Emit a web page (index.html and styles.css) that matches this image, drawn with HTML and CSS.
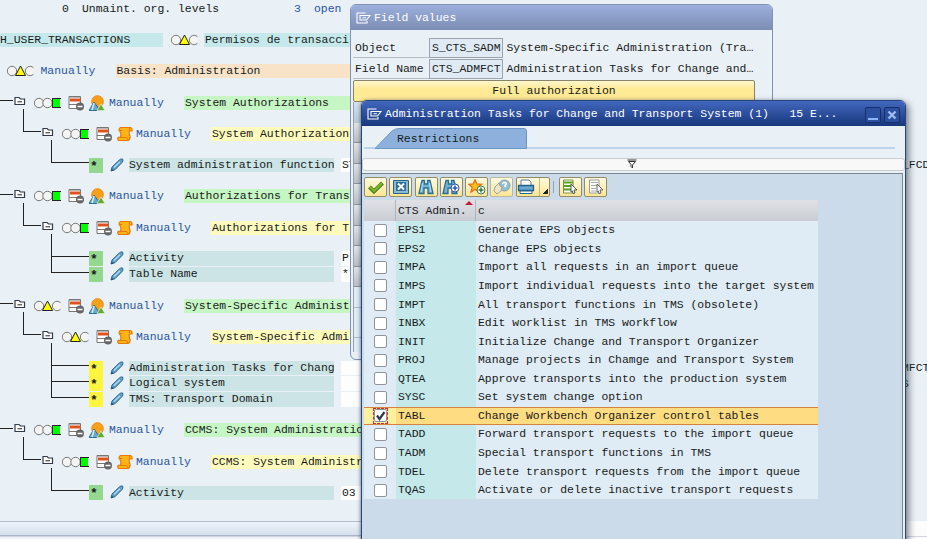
FILE: index.html
```
<!DOCTYPE html>
<html lang="en">
<head>
<meta charset="UTF-8" />
<title>Authorizations</title>
<link rel="stylesheet" href="styles.css">
</head>
<body>

<svg class="sprite">
  <symbol id="folder" viewBox="0 0 12 10"><path d="M1 8.5V1.5H5L6.5 3H10.5V8.5Z" fill="#fff" stroke="#333a48" stroke-width="1.2"/><path d="M3.5 5.8H8" stroke="#222"/></symbol>
  <symbol id="green" viewBox="0 0 27 12"><circle cx="5" cy="6" r="4.7" fill="#f4f4f4" stroke="#777"/><circle cx="13.5" cy="6" r="4.7" fill="#f4f4f4" stroke="#777"/><path d="M18 1.5H27M18 10.5H27M18.5 1V11" stroke="#222" fill="none"/><path d="M19 2H26V10H19Z" fill="#0f0"/></symbol>
  <symbol id="yellow" viewBox="0 0 27 12"><circle cx="5" cy="6" r="4.7" fill="#f4f4f4" stroke="#777"/><path d="M26.5 2.8A4.7 4.7 0 1 0 26.5 9.2" fill="#f4f4f4" stroke="#777"/><path d="M13.5 1L18.5 10.5H8.5Z" fill="#ff0" stroke="#222"/></symbol>
  <symbol id="list" viewBox="0 0 16 16"><path d="M1 1.5H12.5V13.5H1Z" fill="#fff" stroke="#777"/><path d="M1.5 2H12M1 9.5H9M1 13.5H8" stroke="#777"/><path d="M2 5H12" stroke="#e2511b" stroke-width="3"/><circle cx="12" cy="11.5" r="4" fill="#666"/><path d="M9.5 11.5H14.5" stroke="#fff" stroke-width="1.5"/></symbol>
  <symbol id="hill" viewBox="0 0 16 16"><circle cx="8.5" cy="6.5" r="5.8" fill="#f9a01b" stroke="#ed8b12"/><path d="M0 15.5L5 7L11 15.5Z" fill="#6aa9cb" stroke="#286f9c"/><path d="M5 8L3 15" stroke="#d8edf5" stroke-width="1.5"/><path d="M8 15.5L12 9L16 15.5Z" fill="#62ab32" stroke="#e9f2df" stroke-width=".7"/></symbol>
  <symbol id="scroll" viewBox="0 0 16 16"><path d="M3.500 1.500H13.500Q15.500 2.200 15 5H12.500Q11.500 6.500 13 10.500Q13.500 13.500 11 14.500H1.500Q0 12.500 1.500 11.300H3.500Q4.500 8 3 5.500Q.8 3.500 3.500 1.500Z" fill="#fdb515" stroke="#e8780d" stroke-width="1.200"/><path d="M3 4.500H5M12.500 2V4.500M3.500 11.500H9.500L11 14" stroke="#e8780d" fill="none"/></symbol>
  <symbol id="pen" viewBox="0 0 14 14"><path d="M1 13L2 9L9.5 1.8Q10.5 .6 12.7 1Q13.4 3 12.3 4.3L5 11.7Z" fill="#5ba1ca" stroke="#316b91"/><path d="M4 9.5L10 3.7" stroke="#b4d9eb" stroke-width="1.3"/><path d="M1 13L1.8 10.5L3.7 12.2Z" fill="#254f6c"/></symbol>
  <symbol id="exit" viewBox="0 0 15 12"><path d="M9.500 1H1V11H11V9M4 3.500H14L10.500 8H4Z M6.500 5.700H10" fill="none" stroke="#fff" stroke-width="1.100"/></symbol>
</svg>

<div class="tree">
  <div class="row"><span class="count">0</span><span class="unmaint">Unmaint. org. levels</span><span class="blue open-count">3</span><span class="blue">open</span></div>
  <div class="row gap"><span class="role">H_USER_TRANSACTIONS</span><svg class="lights"><use href="#yellow"/></svg><span class="label cyan">Permisos de transacci</span></div>
  <div class="row gap top"><svg class="lights"><use href="#yellow"/></svg><span class="blue status">Manually</span><span class="label orange">Basis: Administration</span></div>

  <div class="row gap l1"><svg class="folder"><use href="#folder"/></svg><svg class="lights"><use href="#green"/></svg><svg class="ico"><use href="#list"/></svg><svg class="ico"><use href="#hill"/></svg><span class="blue status">Manually</span><span class="label green">System Authorizations</span></div>
  <div class="row gap l2"><svg class="folder"><use href="#folder"/></svg><svg class="lights"><use href="#green"/></svg><svg class="ico"><use href="#list"/></svg><svg class="ico"><use href="#scroll"/></svg><span class="blue status">Manually</span><span class="label yellow">System Authorization</span></div>
  <div class="row gap leaf first"><span class="star">*</span><svg class="pen"><use href="#pen"/></svg><span class="field">System administration function</span><span class="value">ST</span><span class="tail">_FCD</span></div>

  <div class="row gap l1"><svg class="folder"><use href="#folder"/></svg><svg class="lights"><use href="#green"/></svg><svg class="ico"><use href="#list"/></svg><svg class="ico"><use href="#hill"/></svg><span class="blue status">Manually</span><span class="label green">Authorizations for Trans</span></div>
  <div class="row gap l2"><svg class="folder"><use href="#folder"/></svg><svg class="lights"><use href="#green"/></svg><svg class="ico"><use href="#list"/></svg><svg class="ico"><use href="#scroll"/></svg><span class="blue status">Manually</span><span class="label yellow">Authorizations for T</span></div>
  <div class="row gap leaf first"><span class="star">*</span><svg class="pen"><use href="#pen"/></svg><span class="field">Activity</span><span class="value">P</span></div>
  <div class="row leaf"><span class="star">*</span><svg class="pen"><use href="#pen"/></svg><span class="field">Table Name</span><span class="value">*</span></div>

  <div class="row gap l1"><svg class="folder"><use href="#folder"/></svg><svg class="lights"><use href="#yellow"/></svg><svg class="ico"><use href="#list"/></svg><svg class="ico"><use href="#hill"/></svg><span class="blue status">Manually</span><span class="label green">System-Specific Administ</span></div>
  <div class="row gap l2"><svg class="folder"><use href="#folder"/></svg><svg class="lights"><use href="#yellow"/></svg><svg class="ico"><use href="#list"/></svg><svg class="ico"><use href="#scroll"/></svg><span class="blue status">Manually</span><span class="label yellow">System-Specific Admi</span></div>
  <div class="row gap leaf first open"><span class="star">*</span><svg class="pen"><use href="#pen"/></svg><span class="field">Administration Tasks for Chang</span><span class="value"></span><span class="tail">MFCT</span></div>
  <div class="row leaf open"><span class="star">*</span><svg class="pen"><use href="#pen"/></svg><span class="field">Logical system</span><span class="value"></span><span class="tail">S</span></div>
  <div class="row leaf open"><span class="star">*</span><svg class="pen"><use href="#pen"/></svg><span class="field">TMS: Transport Domain</span><span class="value"></span></div>

  <div class="row gap l1"><svg class="folder"><use href="#folder"/></svg><svg class="lights"><use href="#green"/></svg><svg class="ico"><use href="#list"/></svg><svg class="ico"><use href="#hill"/></svg><span class="blue status">Manually</span><span class="label green">CCMS: System Administratio</span></div>
  <div class="row gap l2"><svg class="folder"><use href="#folder"/></svg><svg class="lights"><use href="#green"/></svg><svg class="ico"><use href="#list"/></svg><svg class="ico"><use href="#scroll"/></svg><span class="blue status">Manually</span><span class="label yellow">CCMS: System Administr</span></div>
  <div class="row gap leaf first"><span class="star">*</span><svg class="pen"><use href="#pen"/></svg><span class="field">Activity</span><span class="value">03</span></div>
</div>
<footer class="statusbar"><span></span></footer>

<section class="window field-values">
  <header><svg class="exit"><use href="#exit"/></svg><span>Field values</span></header>
  <div class="form">
    <div class="form-row"><label>Object</label><span class="input">S_CTS_SADM</span><span>System-Specific Administration (Tra…</span></div>
    <div class="form-row"><label>Field Name</label><span class="input">CTS_ADMFCT</span><span>Administration Tasks for Change and…</span></div>
    <button>Full authorization</button>
    <div class="side"></div>
  </div>
</section>

<section class="window tasks">
  <header><svg class="exit"><use href="#exit"/></svg><span>Administration Tasks for Change and Transport System (1)&nbsp;&nbsp; 15 E...</span>
    <div class="controls">
      <i><svg viewBox="0 0 14 14"><path d="M2 11H12" stroke="#8fb6fb" stroke-width="2"/></svg></i>
      <i><svg viewBox="0 0 14 14"><path d="M3.500 3.500L10.500 10.500M10.500 3.500L3.500 10.500" stroke="#a0bdf2" stroke-width="2.300"/></svg></i>
    </div>
  </header>
  <div class="tabs">
    <svg class="tab-shape" viewBox="0 0 152 21"><path d="M0 20.500L17 3Q20 .5 24 .5H149Q151.500 .5 151.500 3V20.500Z" fill="#8db1dc" stroke="#6b97c6"/></svg>
    <span>Restrictions</span>
  </div>
  <div class="filter"><svg viewBox="0 0 10 10"><path d="M.5 1H9.500M1.500 2.500H8.500L5.500 6V9L4 7.500V5.500Z" fill="#fff" stroke="#333"/></svg></div>
  <div class="panel">
    <div class="toolbar">
      <b><svg viewBox="0 0 18 16"><path d="M2.500 8L7 12.500L15.500 4" fill="none" stroke="#4f7d20" stroke-width="4"/><path d="M3 8L7 12L15 4.200" fill="none" stroke="#7cb82f" stroke-width="2.200"/></svg></b>
      <b><svg viewBox="0 0 18 16"><path d="M1.500 1.500H16.500V14.500H1.500Z" fill="#8dbad6" stroke="#286486"/><path d="M4 3H14V12H4Z" fill="#2e7299"/><path d="M6 4.500L12 10.500M12 4.500L6 10.500" stroke="#fff" stroke-width="2"/></svg></b>
      <b><svg viewBox="0 0 18 16"><path d="M5 1.500H7.500V5H10.500V1.500H13L16 14.500H11V9H7V14.500H2Z" fill="#75b1d3" stroke="#266d98" stroke-width="1.300"/><path d="M5.500 4L4 13M12.500 4L14 13" stroke="#bce0ef"/></svg></b>
      <b><svg viewBox="0 0 18 16"><path d="M4 1.500H6.500V5H9.500V1.500H12L15 14.500H10V9H6V14.500H1Z" fill="#75b1d3" stroke="#266d98" stroke-width="1.300"/><circle cx="13" cy="9" r="4" fill="#fff" stroke="#31559b"/><path d="M10.500 9H15.500M13 6.500V11.500" stroke="#2660b5" stroke-width="1.600"/></svg></b>
      <b><svg viewBox="0 0 18 16"><path d="M7 .8L8.800 5L13.500 5.300L10 8.300L11 13L7 10.400L3 13L4.200 8.300L.8 5.300L5.200 5Z" fill="#ffc21d" stroke="#e6711b" stroke-width="1.300"/><circle cx="13" cy="11" r="4" fill="#fff" stroke="#3a8056"/><path d="M10.500 11H15.500M13 8.500V13.500" stroke="#2d7c3c" stroke-width="1.500"/></svg></b>
      <b class="disabled"><svg viewBox="0 0 18 16"><circle cx="11.500" cy="6.500" r="5.500" fill="#96bfd0" stroke="#7da0ad"/><path d="M9.500 5Q10 3 12 3.500Q14.500 4.500 12 6.500V8" fill="none" stroke="#fff" stroke-width="1.500"/><path d="M2 8L6 4L7 7L9 8L8 12L4 15L1 12Z" fill="#eee6cc" stroke="#a29d8f"/></svg></b>
      <b class="print"><svg viewBox="0 0 18 16"><path d="M4 6V1H12L14 3V6" fill="#fff" stroke="#5a7990"/><path d="M1.500 6.500H16.500V11.500H1.500Z" fill="#66a9d1" stroke="#235e86" stroke-width="1.300"/><path d="M3 12H15V14.500H3Z" fill="#fff" stroke="#286486"/></svg><u></u></b>
      <em></em>
      <b><svg viewBox="0 0 18 16"><path d="M2.500 1H12V14H2.500Z" fill="#fff" stroke="#789047"/><path d="M3 3.500H12M3 7H12M3 10.500H10" stroke="#59a51a" stroke-width="2.200"/><path d="M10 5L16 11H13L14 14L12 14.500L11.500 12L10 13Z" fill="#fff" stroke="#555"/></svg></b>
      <b><svg viewBox="0 0 18 16"><path d="M2.500 1H12V14H2.500Z" fill="#fff" stroke="#9a9a96"/><path d="M4 3.500H11M4 6.500H10M4 9.500H9M4 12H9" stroke="#aaa"/><path d="M10 5L16 11H13L14 14L12 14.500L11.500 12L10 13Z" fill="#fff" stroke="#666"/></svg></b>
    </div>
    <table>
      <thead><tr><th class="check"></th><th class="key">CTS Admin.<i></i></th><th>c</th></tr></thead>
      <tbody>
        <tr><td><input type="checkbox"></td><td>EPS1</td><td>Generate EPS objects</td></tr>
        <tr><td><input type="checkbox"></td><td>EPS2</td><td>Change EPS objects</td></tr>
        <tr><td><input type="checkbox"></td><td>IMPA</td><td>Import all requests in an import queue</td></tr>
        <tr><td><input type="checkbox"></td><td>IMPS</td><td>Import individual requests into the target system</td></tr>
        <tr><td><input type="checkbox"></td><td>IMPT</td><td>All transport functions in TMS (obsolete)</td></tr>
        <tr><td><input type="checkbox"></td><td>INBX</td><td>Edit worklist in TMS workflow</td></tr>
        <tr><td><input type="checkbox"></td><td>INIT</td><td>Initialize Change and Transport Organizer</td></tr>
        <tr><td><input type="checkbox"></td><td>PROJ</td><td>Manage projects in Chamge and Transport System</td></tr>
        <tr><td><input type="checkbox"></td><td>QTEA</td><td>Approve transports into the production system</td></tr>
        <tr><td><input type="checkbox"></td><td>SYSC</td><td>Set system change option</td></tr>
        <tr class="selected"><td><span class="focus"><input type="checkbox" checked><svg viewBox="0 0 13 13"><path d="M3 6.500L5.500 10L10.500 3" fill="none" stroke="#333a4c" stroke-width="2.200"/></svg></span></td><td>TABL</td><td>Change Workbench Organizer control tables</td></tr>
        <tr><td><input type="checkbox"></td><td>TADD</td><td>Forward transport requests to the import queue</td></tr>
        <tr><td><input type="checkbox"></td><td>TADM</td><td>Special transport functions in TMS</td></tr>
        <tr><td><input type="checkbox"></td><td>TDEL</td><td>Delete transport requests from the import queue</td></tr>
        <tr><td><input type="checkbox"></td><td>TQAS</td><td>Activate or delete inactive transport requests</td></tr>
      </tbody>
    </table>
  </div>
</section>

</body>
</html>
```
FILE: styles.css
```
* {
  box-sizing: border-box;
}
body {
  margin: 0;
  width: 927px;
  height: 539px;
  overflow: hidden;
  position: relative;
  background: #e9f0f6;
  color: #171b20;
  font: 11.43px/14px "Liberation Mono", "Courier New", monospace;
  white-space: nowrap;
}
svg {
  display: block;
  flex: none;
}
.sprite {
  position: absolute;
  width: 0;
  height: 0;
}

/* authorization tree */
.tree {
  height: 521px;
  padding-top: 1.2px;
}
.row {
  display: flex;
  align-items: center;
  height: 15.61px;
}
.row > * {
  flex: none;
}
.gap {
  margin-top: 15.61px;
}
.blue {
  color: #2856a0;
}
.count {
  margin-left: 62px;
  width: 20px;
}
.unmaint {
  width: 212px;
}
.open-count {
  width: 20px;
}
.role {
  width: 163px;
  margin-right: 8px;
  background: #c5e9eb;
}
.lights {
  width: 27px;
  height: 12px;
}
.folder {
  width: 12px;
  height: 10px;
  margin-top: -4px;
}
.ico {
  width: 16px;
  height: 16px;
}
.label {
  width: 400px;
  height: 14px;
  padding-left: 1px;
}
.cyan {
  background: #c5e9eb;
  margin-left: 6px;
}
.orange {
  background: #f9e3c8;
}
.green {
  background: #c6f6c3;
}
.yellow {
  background: #fffbbd;
}
.status {
  width: 75px;
}
.top {
  padding-left: 7px;
}
.top .status {
  margin-left: 6.5px;
}
.l1::before {
  content: "";
  width: 13px;
  height: 1px;
  margin: -4px 1px 0 0;
  background: #222;
}
.l1 .lights, .l2 .lights {
  margin: 0 7px 0 8px;
}
.l1 .ico, .l2 .ico {
  margin-right: 5px;
}
.l1 .status, .l2 .status {
  margin-left: -1px;
}
.l2 .status {
  margin-left: -2px;
}
.l2::before, .leaf::before {
  content: "";
  align-self: flex-end;
  flex: none;
  margin-bottom: 9.5px;
  border: solid #222;
  border-width: 0 0 1px 1px;
}
.l2::before {
  width: 17px;
  height: 22px;
  margin-left: 23px;
  margin-right: 1px;
}
.leaf::before {
  width: 37px;
  height: 17px;
  margin-left: 51px;
}
.leaf.first::before {
  height: 22px;
}
.star {
  width: 14px;
  height: 15px;
  margin-right: 8px;
  padding-left: 1px;
  background: #94d88f;
  font-size: 13px;
  font-weight: bold;
  line-height: 18px;
}
.open .star {
  background: #fff53d;
}
.pen {
  width: 14px;
  height: 14px;
  margin: -1px 5px 0 0;
}
.field {
  width: 205px;
  height: 14.6px;
  margin-right: 7px;
  background: #cce4e5;
}
.leaf .pen {
  margin-left: -1px;
}
.value {
  width: 60px;
  height: 14.6px;
  padding-left: 1px;
  background: #fdfdfe;
}
.tail {
  width: 25px;
  margin-left: auto;
}
.statusbar {
  display: flex;
  height: 18px;
  border-top: 1px solid #b4bfcd;
  background: linear-gradient(#edf3f9, #d5e1ee 13px, #a9b6c8 13px, #a9b6c8 14px, #eef2f7 15px);
}
.statusbar span {
  width: 24px;
  margin: -1px 0 0 auto;
  background: linear-gradient(#fcfcfd 15px, #d4d6e7 15px, #d4d6e7 16px, #fcfcfd 16px);
}

/* windows */
.window {
  position: absolute;
  border-radius: 6px 6px 0 0;
  background: #e9f0f6;
}
.window header {
  display: flex;
  align-items: center;
  height: 25px;
  color: #fff;
  border-radius: 5px 5px 0 0;
}
.exit {
  width: 15px;
  height: 12px;
  margin: 0 3px 0 5px;
}
.field-values {
  left: 350px;
  top: 4px;
  width: 423px;
  height: 356px;
  border: 1px solid #8291b7;
  border-radius: 6px;
}
.field-values header {
  background: linear-gradient(#9cafdd, #7c8db3);
}
.form {
  padding: 8px 16px 0 2px;
}
.form-row {
  display: flex;
  align-items: center;
  height: 20px;
  margin-bottom: 1px;
}
.form-row label {
  width: 76px;
  height: 20px;
  padding-left: 2px;
  line-height: 20px;
  border-bottom: 1px solid #b8bdc4;
}
.input {
  width: 74px;
  height: 20px;
  margin-right: 3.5px;
  padding-left: 2px;
  border: 1px solid #9da4ab;
  background: #dfeaf4;
  line-height: 18px;
}
.form button {
  display: block;
  width: 402px;
  height: 22px;
  padding: 0;
  border: 1px solid #8b8468;
  border-radius: 2px;
  background: linear-gradient(#fff7ce, #ffea96 40%, #ffea96);
  color: inherit;
  font: inherit;
}
.side {
  width: 8px;
  height: 250px;
  border-left: 1px solid #98a0a9;
  background:
    linear-gradient(#d3e1ee, #b5cadc) 0 0 / 100% 21px no-repeat,
    linear-gradient(#dfebf5 20px, #a9bccf 20px, #a9bccf 21px, #dfebf5 21px, #dfebf5 50px, #a9bccf 50px, #a9bccf 51px, #dfebf5 51px) 0 185px / 100% 65px no-repeat,
    repeating-linear-gradient(#e1e4e8, #b9bec5 19.6px, #8b929c 19.6px, #8b929c 20.6px);
}
.tasks {
  left: 361px;
  top: 100px;
  width: 545px;
  height: 445px;
  border: 1px solid #24457e;
  box-shadow: 3px 3px 7px rgba(50, 60, 75, .6), -1px 0 3px rgba(50, 60, 75, .4);
}
.tasks header {
  background: linear-gradient(#4267bd, #18377d);
}
.controls {
  display: flex;
  gap: 3px;
  margin: 2px 0 0 auto;
  padding-right: 5px;
}
.controls i {
  width: 16px;
  height: 16px;
  border: 1px solid #162f69;
  border-radius: 2px;
  background: #2c50a0;
}
.tabs {
  display: grid;
  height: 23px;
  margin: 0 10px 0 2px;
  padding: 2px 0 0 11px;
  border-bottom: 2px solid #bbd3eb;
}
.tab-shape, .tabs span {
  grid-area: 1 / 1;
}
.tab-shape {
  width: 152px;
  height: 21px;
}
.tabs span {
  padding: 4px 0 0 22px;
}
.filter {
  height: 13px;
  margin-top: 9px;
  padding-left: 264px;
  border: 1px solid #c9cdd2;
  border-radius: 3px;
  background: #f8f8f8;
}
.filter svg {
  width: 10px;
  height: 10px;
}
.panel {
  height: 370px;
  margin: 2px 2px 0 0;
  padding: 3px 0 0 2px;
  border: 1px solid #7d858e;
  border-width: 1px 1px 0 0;
  background: #cbdbea;
}
.toolbar {
  display: flex;
  gap: 2.3px;
  height: 23px;
}
.toolbar b {
  display: flex;
  align-items: center;
  justify-content: center;
  width: 23px;
  height: 20px;
  border: 1px solid #958b68;
  border-radius: 2px;
  background: linear-gradient(#fffbe0, #fbe694);
}
.toolbar svg {
  width: 18px;
  height: 16px;
}
.toolbar .disabled {
  border-color: #bdb99f;
}
.toolbar .print {
  width: 34px;
  justify-content: space-between;
}
.print u {
  width: 10px;
  height: 18px;
  border-left: 1px solid #c9b978;
  background: linear-gradient(135deg, transparent 50%, #222 50%) 3px 11px / 5px 5px no-repeat;
}
.toolbar em {
  width: 1px;
  height: 12px;
  margin: 4px 2.5px 0 1px;
  background: #99a3af;
}
table {
  width: 454px;
  table-layout: fixed;
  border-spacing: 0;
  background: #dfebf5;
}
th, td {
  padding: 0 0 0 2px;
  text-align: left;
  font-weight: normal;
}
th {
  height: 21px;
  background: linear-gradient(#dfe1e5, #c9cdd3);
  border-right: 1px solid #b0b5bc;
}
th:last-child {
  border: 0;
}
.check {
  width: 32px;
}
.key {
  width: 80px;
  position: relative;
}
.key i {
  position: absolute;
  right: 2px;
  top: 1px;
  border: solid transparent;
  border-width: 0 4px 4px;
  border-bottom-color: #c81832;
}
td {
  height: 18.57px;
  line-height: 14px;
}
td:nth-child(2) {
  background: #c5e9eb;
}
td:first-child {
  padding-left: 10px;
}
input {
  appearance: none;
  display: block;
  width: 13px;
  height: 13px;
  margin: 0;
  border: 1px solid #8f949b;
  border-radius: 2px;
  background: #fff;
}
.selected td {
  border: solid #d78340;
  border-width: 1px 0;
  background: #fddc82;
}
.selected td:first-child {
  padding-left: 9px;
  background: #fff0a0;
}
.focus {
  display: grid;
  width: 15px;
  height: 16px;
  place-items: center;
  border: 1px dashed #e12632;
}
.focus > * {
  grid-area: 1 / 1;
}
.focus svg {
  width: 13px;
  height: 13px;
}
```
